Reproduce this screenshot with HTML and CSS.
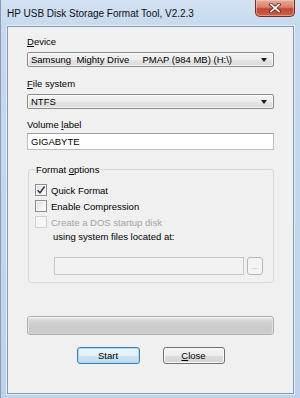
FILE: index.html
```html
<!DOCTYPE html>
<html>
<head>
<meta charset="utf-8">
<link rel="stylesheet" href="styles.css">
</head>
<body>
<div class="window">
  <div class="titlebar">
    <span class="title">HP USB Disk Storage Format Tool, V2.2.3</span>
    <div class="close-btn">
      <svg width="12" height="10" viewBox="0 0 12 10">
        <path d="M2 1.5 L10 8.5 M10 1.5 L2 8.5" stroke="#5a1c14" stroke-width="3.4" stroke-linecap="square"/>
        <path d="M2 1.5 L10 8.5 M10 1.5 L2 8.5" stroke="#ffffff" stroke-width="1.8" stroke-linecap="square"/>
      </svg>
    </div>
  </div>
  <div class="client">
    <div class="label label-first"><u>D</u>evice</div>
    <div class="combo"><span class="combo-text">Samsung  Mighty Drive     PMAP (984 MB) (H:\)</span><span class="arrow"></span></div>
    <div class="label"><u>F</u>ile system</div>
    <div class="combo"><span class="combo-text">NTFS</span><span class="arrow"></span></div>
    <div class="label label-vol">Volume <u>l</u>abel</div>
    <div class="textbox">GIGABYTE</div>
    <fieldset class="group">
      <legend class="legend">Format <u>o</u>ptions</legend>
      <div class="check-row row-first"><span class="check checked"><svg width="10" height="10" viewBox="0 0 10 10"><path d="M1.6 5.2 L4 7.8 L8.6 1.6" fill="none" stroke="#333c4a" stroke-width="1.6"/></svg></span><span>Quick Format</span></div>
      <div class="check-row"><span class="check"></span><span>Enable Compression</span></div>
      <div class="check-row disabled"><span class="check"></span><span>Create a DOS startup disk</span></div>
      <div class="sub-line">using system files located at:</div>
      <div class="path-row">
        <div class="path-box"></div>
        <div class="browse">...</div>
      </div>
    </fieldset>
    <div class="progress"></div>
    <div class="buttons">
      <div class="btn btn-default">Start</div>
      <div class="btn"><u>C</u>lose</div>
    </div>
  </div>
</div>
</body>
</html>
```
FILE: styles.css
```css
html, body {
  margin: 0;
  padding: 0;
  background: #c3d6ec;
}
.window {
  width: 300px;
  height: 398px;
  box-sizing: border-box;
  display: flex;
  flex-direction: column;
  background: linear-gradient(to bottom, #d3e2f3 0px, #c6d9ee 26px, #bed3ea 100%);
  border-left: 1px solid #8a9db5;
  font-family: "Liberation Sans", Arial, sans-serif;
  font-size: 9.5px;
  color: #000;
}
.titlebar {
  height: 26px;
  flex: none;
  display: flex;
  align-items: flex-start;
}
.title {
  font-size: 10px;
  line-height: 12px;
  padding: 8px 0 0 6px;
  color: #101010;
}
.close-btn {
  margin-left: auto;
  margin-right: 5px;
  width: 40px;
  height: 17px;
  box-sizing: border-box;
  border: 1px solid #6e2e25;
  border-top: none;
  border-radius: 0 0 5px 5px;
  background: linear-gradient(to bottom, #e8ab98 0%, #d9806b 45%, #c6452e 55%, #cf5f48 100%);
  box-shadow: inset 0 0 0 1px rgba(255, 220, 210, 0.45);
  display: flex;
  align-items: center;
  justify-content: center;
}
.client {
  flex: 1;
  margin: 0 6px 4px 6px;
  background: #f0f0f0;
  border: 1px solid #8799b0;
  box-shadow: 0 0 0 1px #e3edf8;
  padding: 0 19px 0 19px;
  display: flex;
  flex-direction: column;
}
.label {
  line-height: 11px;
  height: 11px;
  margin-top: 11px;
}
.label-first {
  margin-top: 9px;
}
.label-vol {
  margin-top: 10px;
}
.combo {
  margin-top: 5px;
  height: 15px;
  box-sizing: border-box;
  border: 1px solid #8b8b8b;
  border-radius: 2px;
  background: linear-gradient(to bottom, #f4f4f4 0%, #ededed 50%, #e4e4e4 51%, #dcdcdc 100%);
  box-shadow: inset 0 0 0 1px rgba(255,255,255,0.6);
  display: flex;
  align-items: center;
  padding: 0 6px 0 3px;
}
.combo-text {
  white-space: pre;
  line-height: 13px;
  flex: 1;
}
.arrow {
  width: 0;
  height: 0;
  border-left: 3px solid transparent;
  border-right: 3px solid transparent;
  border-top: 4px solid #1a1a1a;
}
.textbox {
  margin-top: 3px;
  height: 17px;
  box-sizing: border-box;
  background: #fff;
  border: 1px solid #b9bcc4;
  border-top-color: #9ea1a8;
  padding: 0 3px;
  line-height: 15px;
}
.group {
  margin: 14px 0 0 1px;
  padding: 0 6px 7px 6px;
  border: 1px solid #d3dbe1;
  border-radius: 3px;
  min-width: 0;
}
.legend {
  padding: 0 1px;
  line-height: 11px;
}
.check-row {
  display: flex;
  align-items: center;
  gap: 4px;
  height: 16px;
}
.row-first {
  margin-top: 7px;
}
.check {
  width: 12px;
  height: 12px;
  box-sizing: border-box;
  border: 1px solid #8e8f8f;
  background: linear-gradient(135deg, #dcdcdc 0%, #f4f4f4 60%, #ffffff 100%);
  box-shadow: inset 0 0 0 1px #f4f4f4;
  display: flex;
  align-items: center;
  justify-content: center;
}
.disabled {
  color: #a3a3a3;
}
.disabled .check {
  border-color: #d0d0d0;
  background: #f6f6f6;
  box-shadow: none;
}
.sub-line {
  margin-top: 1px;
  padding-left: 18px;
  line-height: 11px;
}
.path-row {
  margin-top: 15px;
  padding-left: 19px;
  display: flex;
  gap: 3px;
}
.path-box {
  width: 190px;
  height: 18px;
  box-sizing: border-box;
  border: 1px solid #c5c7cb;
  background: #f2f2f2;
}
.browse {
  width: 16px;
  height: 18px;
  box-sizing: border-box;
  border: 1px solid #b4b8bb;
  border-radius: 3px;
  background: #f4f4f4;
  color: #9a9a9a;
  font-size: 8px;
  line-height: 18px;
  text-align: center;
}
.progress {
  margin-top: 33px;
  height: 19px;
  box-sizing: border-box;
  border: 1px solid #b0b0b0;
  border-radius: 3px;
  background: linear-gradient(to bottom, #e6e6e6 0%, #d2d2d2 30%, #c9c9c9 70%, #cfcfcf 100%);
  box-shadow: inset 0 1px 0 #f2f2f2, inset 1px 0 0 #e2e2e2, inset -1px 0 0 #e2e2e2;
}
.buttons {
  margin-top: 12px;
  display: flex;
  justify-content: center;
  gap: 23px;
}
.btn {
  width: 62px;
  height: 17px;
  box-sizing: border-box;
  border: 1px solid #707070;
  border-radius: 3px;
  background: linear-gradient(to bottom, #f4f4f4 0%, #ececec 50%, #dedede 51%, #d2d2d2 100%);
  box-shadow: inset 0 0 0 1px #fbfbfb;
  text-align: center;
  line-height: 15px;
}
.btn-default {
  width: 63px;
  border-color: #3d80b2;
  background: linear-gradient(to bottom, #eef6fa 0%, #e1eff7 50%, #cde4f1 51%, #c1dcec 100%);
  box-shadow: inset 0 0 0 1px #a9d8f2;
}
```
